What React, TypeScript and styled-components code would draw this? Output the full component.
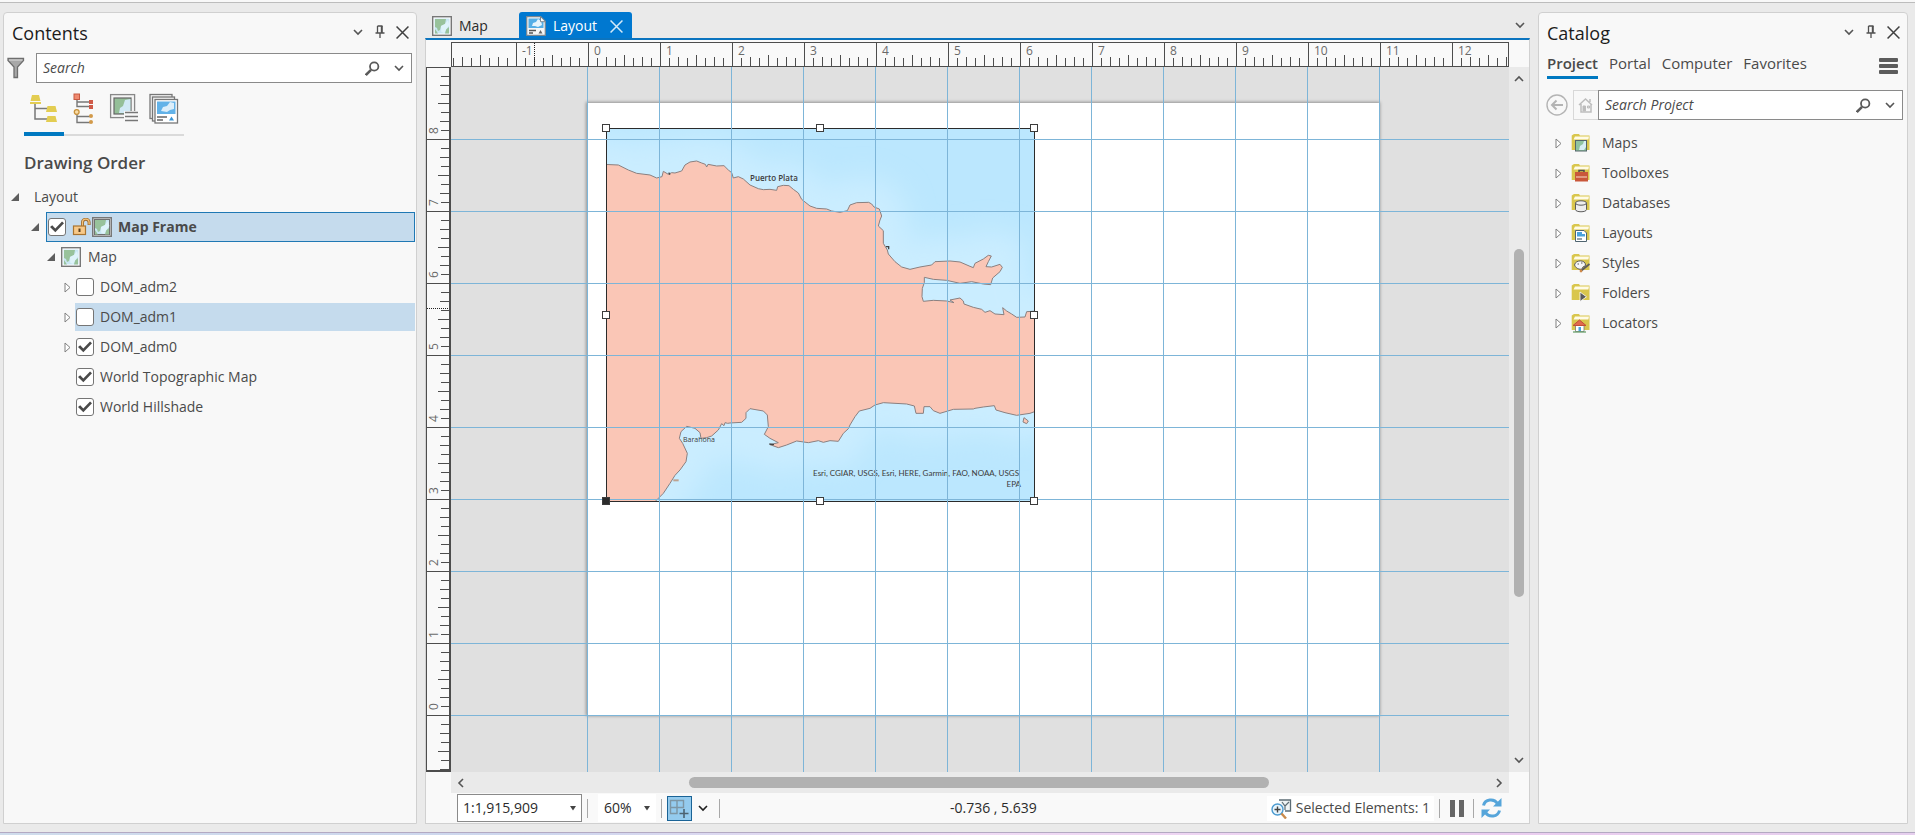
import React from "react";
import styled, { createGlobalStyle, css } from "styled-components";

const INK = "#4a4a4a";
const BLUE = "#0079c1";
const INCH = 72;

const GlobalStyle = createGlobalStyle`
  *, *::before, *::after { box-sizing: border-box; }
  body {
    margin: 0;
    background: #eaeaea;
    color: ${INK};
    font-family: "Open Sans", "Noto Sans", sans-serif;
    font-size: 14px;
    line-height: 20px;
  }
  button, input, select { font: inherit; color: inherit; margin: 0; }
  h1, h2, ul { margin: 0; padding: 0; font-weight: inherit; }
  ul { list-style: none; }
  svg { display: block; flex: none; }
`;

/* ---------- shell ---------- */

const Shell = styled.div`
  display: flex;
  flex-direction: column;
  min-height: 100vh;
`;

const TopEdge = styled.div`
  height: 3px;
  background: #f8f8f8;
  border-bottom: 1px solid #bcbcbc;
`;

const BottomEdge = styled.div`
  height: 3px;
  border-top: 1px solid #b3a9c2;
  background: linear-gradient(90deg, #cfdcec 0%, #cdd6ee 28%, #f0dcf5 50%, #eccdf0 75%, #e6cfee 100%);
`;

const Workspace = styled.main`
  flex: 1;
  display: grid;
  grid-template-columns: 414px minmax(0, 1fr) 370px;
  gap: 8px;
  padding: 9px 7px 8px 3px;
`;

const Pane = styled.section`
  background: #f8f8f8;
  border: 1px solid #d0d0d0;
  border-radius: 4px 4px 0 0;
`;

const PaneHeader = styled.header`
  display: flex;
  align-items: center;
  height: 40px;
  padding: 0 3px 2px 8px;
`;

const PaneTitle = styled.h1`
  flex: 1;
  padding-top: 2px;
  font-size: 18px;
  line-height: 24px;
  color: #1c1c1c;
`;

const IconButton = styled.button<{ $w?: number }>`
  display: flex;
  align-items: center;
  justify-content: center;
  width: ${(p) => p.$w ?? 22}px;
  height: 24px;
  padding: 0;
  border: 0;
  background: none;
  color: #505050;
`;

const FilterButton = styled(IconButton)`
  justify-content: flex-start;
  padding-left: 1px;
`;

const SearchRow = styled.div`
  display: flex;
  align-items: center;
  height: 30px;
  padding: 0 4px 0 2px;
`;

const SearchBox = styled.label`
  flex: 1;
  display: flex;
  align-items: center;
  height: 30px;
  background: #fff;
  border: 1px solid #8a8a8a;
`;

const SearchInput = styled.input`
  flex: 1;
  min-width: 0;
  padding: 0 6px;
  border: 0;
  outline: 0;
  background: none;
  font-style: italic;
  &::placeholder { color: ${INK}; opacity: 1; }
`;

/* ---------- contents ---------- */

const ViewTabs = styled.div`
  display: flex;
  width: 160px;
  margin: 8px 0 0 20px;
  border-bottom: 2px solid #dadada;
`;

const ViewTab = styled.button<{ $active?: boolean }>`
  display: flex;
  justify-content: center;
  width: 40px;
  height: 45px;
  margin-bottom: -2px;
  padding: 2px 0 0;
  border: 0;
  border-bottom: 4px solid ${(p) => (p.$active ? BLUE : "transparent")};
  background: none;
`;

const Heading = styled.h2`
  padding: 17px 0 9px 20px;
  font-size: 17px;
  line-height: 20px;
  font-weight: 600;
`;

const TreeRow = styled.li<{ $indent: number }>`
  display: flex;
  align-items: center;
  height: 30px;
  padding: 0 1px 0 ${(p) => p.$indent}px;
`;

const Toggle = styled.button`
  display: flex;
  justify-content: center;
  width: 16px;
  height: 20px;
  align-items: center;
  padding: 0;
  border: 0;
  background: none;
`;

const Spacer = styled.span`
  width: 16px;
`;

const RowBody = styled.div<{ $tone?: "frame" | "row"; $pad: number }>`
  flex: 1;
  display: flex;
  align-items: center;
  height: 28px;
  padding-left: ${(p) => p.$pad}px;
  ${(p) => p.$tone === "row" && css`background: #c5dbed;`}
  ${(p) =>
    p.$tone === "frame" &&
    css`
      height: 30px;
      margin-left: 3px;
      background: #c5dbed;
      border: 1px solid #1f78b4;
      font-weight: 700;
    `}
`;

const CheckLabel = styled.label`
  display: flex;
  align-items: center;
  gap: 6px;
`;

const Check = styled.input`
  appearance: none;
  display: grid;
  place-items: center;
  width: 18px;
  height: 18px;
  background: #fff;
  border: 1px solid #757575;
  border-radius: 3px;
  &:checked::before {
    content: "";
    width: 14px;
    height: 12px;
    background: #4a4a4a;
    clip-path: polygon(0 50%, 16% 36%, 38% 62%, 86% 4%, 100% 18%, 38% 94%);
  }
`;

const RowIcons = styled.span`
  display: flex;
  align-items: center;
  gap: 1px;
`;

const RowText = styled.span<{ $left?: number }>`
  padding-left: ${(p) => p.$left ?? 7}px;
`;

/* ---------- catalog ---------- */

const CatalogNav = styled.nav`
  display: flex;
  height: 26px;
  gap: 11px;
  padding: 0 9px 0 8px;
`;

const CatalogLink = styled.a<{ $active?: boolean }>`
  height: 26px;
  color: ${INK};
  font-size: 15px;
  text-decoration: none;
  font-weight: ${(p) => (p.$active ? 600 : 400)};
  border-bottom: 3px solid ${(p) => (p.$active ? BLUE : "transparent")};
`;

const NavMenu = styled.button`
  margin: 4px 0 0 auto;
  padding: 0;
  height: 18px;
  border: 0;
  background: none;
`;

const CatalogSearch = styled(SearchRow)`
  margin: 11px 0 8px;
  padding-left: 6px;
`;

const HomeButton = styled(IconButton)`
  height: 30px;
  margin-left: 4px;
  border: 1px solid #d8d8d8;
  border-right: 0;
`;

const CatalogRow = styled.li`
  display: flex;
  align-items: center;
  height: 30px;
  padding-left: 11px;
`;

const CatalogName = styled.span`
  padding-left: 11px;
`;

/* ---------- document view ---------- */

const Document = styled.section`
  display: flex;
  flex-direction: column;
  min-width: 0;
`;

const TabStrip = styled.div`
  display: flex;
  align-items: center;
  height: 26px;
`;

const DocTab = styled.div<{ $active?: boolean }>`
  display: flex;
  align-items: center;
  align-self: stretch;
  padding: 2px 6px 0 7px;
  color: ${(p) => (p.$active ? "#fff" : "#2b2b2b")};
  ${(p) =>
    p.$active
      ? css`background: #0078d0; border-radius: 3px 3px 0 0; margin-left: 25px;`
      : css`background: none;`}
`;

const DocTabButton = styled.button`
  display: flex;
  align-items: center;
  gap: 7px;
  padding: 0;
  border: 0;
  background: none;
`;

const TabClose = styled(IconButton)`
  margin-left: 9px;
  width: 20px;
  color: #fff;
`;

const StripEnd = styled.div`
  margin-left: auto;
`;

const Frame = styled.div`
  flex: 1;
  display: grid;
  grid-template-columns: 25px minmax(0, 1fr) 20px;
  grid-template-rows: 25px minmax(560px, 1fr) 21px 30px;
  padding-top: 2px;
  background: #f9f9f9;
  border: 1px solid #d0d0d0;
  border-top: 2px solid #0b74bf;
`;

const HRuler = styled.div`
  grid-area: 1 / 2;
  overflow: hidden;
  border: 1px solid #4d4d4d;
`;

const VRuler = styled.div`
  grid-area: 2 / 1;
  overflow: hidden;
  border: 1px solid #4d4d4d;
  border-right-width: 2px;
  border-bottom-width: 2px;
`;

const RulerText = styled.text`
  font-size: 12px;
  fill: #6a6a6a;
`;

const Canvas = styled.div`
  grid-area: 2 / 2;
  position: relative;
  overflow: hidden;
  background: #e0e0e0;
`;

const Sheet = styled.div`
  position: absolute;
  left: 136px;
  top: 36px;
  width: 792px;
  height: 612px;
  background: #fff;
  box-shadow: 0 0 3px 1px rgba(0, 0, 0, 0.35);
`;

const MapFrame = styled.svg`
  position: absolute;
  left: 155px;
  top: 61px;
`;

const Guides = styled.svg`
  position: absolute;
  inset: 0;
`;

const Handle = styled.span<{ $x: number; $y: number; $anchor?: boolean }>`
  position: absolute;
  left: ${(p) => 151 + p.$x}px;
  top: ${(p) => 57 + p.$y}px;
  width: 8px;
  height: 8px;
  border: 1px solid #3c3c3c;
  background: ${(p) => (p.$anchor ? "#2b2b2b" : "#fff")};
`;

const VScroll = styled.div`
  grid-area: 2 / 3;
  display: flex;
  flex-direction: column;
  align-items: center;
  background: #eaeaea;
`;

const HScroll = styled.div`
  grid-area: 3 / 2;
  display: flex;
  align-items: center;
  background: #eaeaea;
`;

const Track = styled.div<{ $vertical?: boolean }>`
  flex: 1;
  display: flex;
  flex-direction: ${(p) => (p.$vertical ? "column" : "row")};
`;

const Thumb = styled.div<{ $vertical?: boolean }>`
  border-radius: 6px;
  background: #b1b1b1;
  ${(p) =>
    p.$vertical
      ? css`width: 10px; height: 53%; margin-top: 158px;`
      : css`height: 11px; width: 57%; margin-left: 218px;`}
`;

const StatusBar = styled.footer`
  grid-area: 4 / 1 / 5 / 4;
  display: flex;
  align-items: center;
  padding: 0 25px 0 31px;
  color: #2b2b2b;
`;

const StatusGroup = styled.div`
  display: flex;
  align-items: center;
  gap: 5px;
`;

const SelectWrap = styled.label<{ $w: number; $boxed?: boolean }>`
  display: grid;
  align-items: center;
  width: ${(p) => p.$w}px;
  height: 28px;
  background: #fff;
  border: 1px solid ${(p) => (p.$boxed ? "#8a8a8a" : "transparent")};
  > * { grid-area: 1 / 1; }
  > svg { justify-self: end; margin-right: 4px; pointer-events: none; }
`;

const Select = styled.select`
  appearance: none;
  width: 100%;
  padding: 0 5px;
  border: 0;
  outline: 0;
  background: none;
`;

const Divider = styled.span`
  width: 1px;
  height: 19px;
  background: #a8a8a8;
`;

const SnapButton = styled.button`
  width: 25px;
  height: 25px;
  padding: 1px;
  border: 1px solid #1a6396;
  background: #94cbee;
`;

const Coordinates = styled.output`
  flex: 1;
  text-align: center;
`;

const Selected = styled.button`
  display: flex;
  align-items: center;
  gap: 4px;
  height: 25px;
  padding: 0 4px;
  border: 0;
  background: #fff;
  color: ${INK};
`;

/* ---------- icons ---------- */

const Chevron = ({ dir = "down", color = "#555" }: { dir?: "down" | "up" | "left" | "right"; color?: string }) => {
  const d = { down: "M1 3l4 4 4-4", up: "M1 7l4-4 4 4", left: "M7 1L3 5l4 4", right: "M3 1l4 4-4 4" }[dir];
  return (
    <svg width="10" height="10" viewBox="0 0 10 10" fill="none" stroke={color} strokeWidth="1.6">
      <path d={d} />
    </svg>
  );
};

const Pin = () => (
  <svg width="10" height="14" viewBox="0 0 10 14" fill="none" stroke="#505050">
    <path d="M2.500 1h5M2.500 1v6.500M0.500 8h9M5 8v5" strokeWidth="1.300" />
    <path d="M6.800 1v7" strokeWidth="2" />
  </svg>
);

const Cross = ({ color = "#404040" }) => (
  <svg width="13" height="13" viewBox="0 0 12 12" stroke={color} strokeWidth="1.400">
    <path d="M.5.5l11 11M11.500.5l-11 11" />
  </svg>
);

const Magnifier = () => (
  <svg width="15" height="15" viewBox="0 0 15 15" fill="none" stroke="#5a5a5a">
    <circle cx="9.200" cy="5.500" r="4.200" strokeWidth="1.800" />
    <path d="M6 8.800L.8 14" strokeWidth="2.600" />
  </svg>
);

const Funnel = () => (
  <svg width="18" height="22" viewBox="0 0 18 22">
    <path d="M1 1.500h15.500v2L10.500 10v10.500h-3.500V10L1 3.500z" fill="#a8a8a8" stroke="#6e6e6e" strokeWidth="1.300" />
    <path d="M2 3h13.500" stroke="#ddd" />
  </svg>
);

const Collapse = () => (
  <svg width="8" height="8" viewBox="0 0 8 8"><path d="M8 0v8H0z" fill="#5e5e5e" /></svg>
);

const Expand = () => (
  <svg width="7" height="11" viewBox="0 0 7 11"><path d="M1 1v9l5-4.500z" fill="#fff" stroke="#808080" /></svg>
);

const MapGlyph = ({ size = 20, frame = false }: { size?: number; frame?: boolean }) => (
  <svg width={size} height={size} viewBox="0 0 20 20">
    <rect x=".7" y=".7" width="18.600" height="18.600" fill={frame ? "#dcdcdc" : "#fff"} stroke="#777" strokeWidth="1.400" />
    <rect x="2.500" y="2.500" width="15" height="15" fill="#c9e6f3" stroke={frame ? "#707070" : "none"} />
    <path d="M3 3h11l-1 5-4 2-1 4-2 1-1-3-2-1z" fill="#98c29b" />
    <path d="M3 13l3 4.500H3zM17 11v6.500h-4l1-4z" fill="#98c29b" />
    <path d="M9 10l4-2 3-4 1.300 5-3 4-2 4-3-1z" fill="#dff3fa" />
  </svg>
);

const LayoutGlyph = ({ size = 20 }) => (
  <svg width={size} height={size} viewBox="0 0 20 20">
    <path d="M.7.700h14l4.600 4.600v14H.7z" fill="#f7f7f7" stroke="#7a8791" strokeWidth="1.200" />
    <path d="M2.500 2.500h12v3.500h3v6h-15z" fill="#55aee6" />
    <path d="M6 10l1-3 3-1 2-3 3 2 1 4-4 2-3-1z" fill="#e6f4fc" />
    <path d="M14.500.7v5h5z" fill="#fff" stroke="#7a8791" />
    <path d="M3 14.500h7M3 17h4" stroke="#555" strokeWidth="1.400" />
    <path d="M12.500 17.500l2-3.500 2 3.500z" fill="#666" />
  </svg>
);

const Lock = () => (
  <svg width="19" height="18" viewBox="0 0 19 18" fill="none">
    <path d="M10.500 8V4.500a3.300 3.300 0 0 1 6.600 0V7" stroke="#9c6a2c" strokeWidth="3" />
    <path d="M10.500 8V4.500a3.300 3.300 0 0 1 6.600 0V6.500" stroke="#f5c27a" strokeWidth="1.300" />
    <rect x="1.500" y="8" width="12" height="8.500" fill="#f8c988" stroke="#a97430" strokeWidth="1.200" />
    <path d="M7.500 10.500v3.500" stroke="#5c4020" strokeWidth="2" />
  </svg>
);

const OrderIcon = () => (
  <svg width="30" height="32" viewBox="0 0 30 32">
    <path d="M6 11v15h13M6 15.500h13" fill="none" stroke="#777" strokeWidth="1.500" />
    <path d="M3 2h7l1.500 6H1.500zM1 9h11v2H1zM18.500 13h8l1.500 6H17zM18.500 23h8l1.500 6H17z" fill="#e3cd52" />
  </svg>
);

const SourceIcon = () => (
  <svg width="24" height="32" viewBox="0 0 24 32" fill="none">
    <path d="M5 6v7.500h13M5 9h13M5 20v9.500h13M5 23.500h13" stroke="#777" strokeWidth="1.400" />
    <rect x="2" y="1" width="5.500" height="5.500" fill="#f08a70" stroke="#c65a42" />
    <path d="M17 7h4v4h-4zM17 12h4v4h-4z" fill="#cf5a48" />
    <circle cx="4.700" cy="19" r="2.400" fill="#f9dca8" stroke="#c8923c" strokeWidth="1.300" />
    <circle cx="19" cy="23" r="2" fill="#d29a4a" />
    <circle cx="19" cy="29" r="2" fill="#d29a4a" />
  </svg>
);

const SelectionIcon = () => (
  <svg width="30" height="30" viewBox="0 0 30 30">
    <rect x="1.600" y="1.600" width="24" height="23" fill="#f4f4f4" stroke="#888" strokeWidth="1.300" />
    <rect x="5" y="5" width="17" height="16" fill="#94bf98" stroke="#666" strokeWidth="1.200" />
    <path d="M10 20l1-5 3-2 2-6 5.500-1v14z" fill="#d0e9f5" />
    <path d="M15 18h15v10H15z" fill="#f8f8f8" />
    <path d="M16 19.500h13M16 23.500h13M16 27.500h13" stroke="#777" strokeWidth="1.300" />
  </svg>
);

const ElementsIcon = () => (
  <svg width="30" height="32" viewBox="0 0 30 32">
    <rect x="1" y="1.500" width="22" height="24" fill="#f4f4f4" stroke="#777" strokeWidth="1.300" />
    <rect x="3.500" y="4" width="22" height="24" fill="#f4f4f4" stroke="#777" strokeWidth="1.300" />
    <rect x="6" y="6.500" width="22.500" height="23.500" fill="#fff" stroke="#777" strokeWidth="1.300" />
    <rect x="8" y="8.500" width="18.500" height="12.500" fill="#62b2e8" />
    <path d="M12 18l2-4 4-1 3-4 4 1v6l-4 1-3 2z" fill="#dceefa" />
    <path d="M8 24h10M8 27h6" stroke="#666" strokeWidth="1.400" />
    <path d="M20 27.500l2.500-4 2.500 4z" fill="#3a95d4" />
  </svg>
);

const overlays: Record<string, React.ReactNode> = {
  Maps: (
    <>
      <rect x="4.500" y="7.500" width="11" height="10.500" fill="#8fc3a0" stroke="#55666b" />
      <path d="M8 17l1-4 3-2 1-3h2v6l-2 3z" fill="#d7eef4" />
    </>
  ),
  Toolboxes: (
    <>
      <path d="M8 9V7.500h5V9" fill="none" stroke="#4c4c4c" strokeWidth="1.500" />
      <rect x="4" y="9" width="13" height="9.500" fill="#c9573a" />
      <path d="M5 14h11" stroke="#f2c6b2" strokeWidth="1.200" />
    </>
  ),
  Databases: (
    <g fill="#eee" stroke="#5c5c5c">
      <path d="M4.500 10v6.500c0 3 11 3 11 0V10" />
      <ellipse cx="10" cy="10" rx="5.500" ry="2.200" />
    </g>
  ),
  Layouts: (
    <>
      <path d="M4.500 7.500h8.500l2.500 2.500v8.500h-11z" fill="#fff" stroke="#4f6470" />
      <path d="M6 9h5v2h3v2.500H6z" fill="#4aa3dc" />
      <path d="M6 16h5" stroke="#4f6470" strokeWidth="1.200" />
    </>
  ),
  Styles: (
    <>
      <path d="M3.500 12c1-5.500 11-5.500 11 0 0 2-3 1-3 3s-6 2-8-3z" fill="#f6f6f6" stroke="#5c5c5c" />
      <path d="M6.500 11h1.500M10 10h1.500" stroke="#5c5c5c" strokeWidth="1.200" />
      <path d="M10.500 17.500l8-6.500" stroke="#5c5c5c" strokeWidth="1.800" />
      <circle cx="10" cy="18" r="1.400" fill="#d08a4a" />
    </>
  ),
  Folders: <path d="M9 9l6.500 4.800L9 18.500z" fill="#5a5a5a" stroke="#fff" strokeWidth=".8" />,
  Locators: (
    <>
      <path d="M4.500 12.500h8.500v6H4.500z" fill="#fff" stroke="#777" strokeWidth=".8" />
      <path d="M2 12.500l6.500-5.500 6.500 5.500z" fill="#e06a4e" stroke="#c24f38" />
      <path d="M7.500 14h2.500v4H7.500z" fill="#4aa3dc" />
      <path d="M2 19h13" stroke="#5e9a62" strokeWidth="1.200" />
    </>
  ),
};

const Folder = ({ kind }: { kind: string }) => (
  <svg width="20" height="20" viewBox="0 0 20 20">
    <path d="M.7 17V2.500L3 1h5l1 1.500h9.500V17z" fill="#d9c64d" />
    <path d="M2.500 6.500L4 3.500h14l-.6 3z" fill="#fffbe6" />
    {overlays[kind]}
  </svg>
);

const Back = () => (
  <svg width="22" height="22" viewBox="0 0 22 22" fill="none" stroke="#b4b4b4">
    <circle cx="11" cy="11" r="10" strokeWidth="1.400" />
    <path d="M17 11H6M10.500 6.500L6 11l4.500 4.500" strokeWidth="2" />
  </svg>
);

const Home = () => (
  <svg width="16" height="16" viewBox="0 0 16 16" fill="none" stroke="#bdbdbd">
    <path d="M1 8l6.500-6 6.500 6M3 7v8h10V7M12 5V2" strokeWidth="1.500" />
    <path d="M5 9h2.500v5H5z" fill="#bdbdbd" />
    <path d="M9.500 9h2v2h-2z" fill="#ddd" />
  </svg>
);

const Caret = () => (
  <svg width="8" height="5" viewBox="0 0 8 5"><path d="M1 0h6L4 4.500z" fill="#444" /></svg>
);

const SnapIcon = () => (
  <svg width="21" height="21" viewBox="0 0 21 21" fill="none" stroke="#7d96a5">
    <path d="M1.500 2.500h13v7h-13zM1.500 9.500v6h6.500v-13" strokeWidth="1.400" />
    <path d="M15 11v9M10.500 15.500h9" stroke="#4c6270" strokeWidth="1.600" />
  </svg>
);

const ZoomSelected = () => (
  <svg width="21" height="21" viewBox="0 0 21 21" fill="none">
    <path d="M8 2h11.500v11H14" fill="#eef3f5" stroke="#5d6d75" strokeWidth="1.300" />
    <path d="M11 4l3 4 4-4M14 8v4" stroke="#5d6d75" strokeWidth="1.200" />
    <circle cx="6.500" cy="11.500" r="5.500" fill="#e8f5fd" stroke="#4a9ad0" strokeWidth="1.400" />
    <path d="M6.500 8.500v6M3.500 11.500h6" stroke="#444" strokeWidth="1.400" />
    <path d="M10.500 15.500l4.500 5" stroke="#c98b4c" strokeWidth="2.400" />
  </svg>
);

const Pause = () => (
  <svg width="14" height="17" viewBox="0 0 14 17"><path d="M0 0h5v17H0zM9 0h5v17H9z" fill="#666" /></svg>
);

const Refresh = () => (
  <svg width="21" height="20" viewBox="0 0 21 20">
    <g fill="none" stroke="#56a5da" strokeWidth="3">
      <path d="M2.500 7.500C4 1 13 0 16.500 5.500" />
      <path d="M18.500 12.500C17 19 8 20 4.500 14.500" />
    </g>
    <path d="M20.500 0v8.500H12zM.5 20v-8.500H9z" fill="#56a5da" />
  </svg>
);

/* ---------- rulers and map ---------- */

const tickLength = (i: number) => (i % 8 === 0 ? 25 : i % 4 === 0 ? 11 : i % 2 === 0 ? 9 : 8);
const range = (from: number, to: number) => Array.from({ length: to - from + 1 }, (_, i) => from + i);

const HorizontalRuler = () => (
  <HRuler>
    <svg width="100%" height="23">
      <g shapeRendering="crispEdges">
        {range(-15, 240).map((i) => (
          <path key={i} d={`M${136.5 + i * 9} 23v${-tickLength((i + 800) % 8)}`} stroke="#4d4d4d" />
        ))}
        <path d="M82.500 0v23" stroke="#222" strokeDasharray="1 1" />
      </g>
      {range(-1, 12).map((n) => (
        <RulerText key={n} x={142 + n * INCH} y="12">{n}</RulerText>
      ))}
    </svg>
  </HRuler>
);

const VerticalRuler = () => (
  <VRuler>
    <svg width="22" height="100%">
      <g shapeRendering="crispEdges">
        {range(-60, 71).map((i) => (
          <path key={i} d={`M22 ${647.5 - i * 9}h${-tickLength((i + 800) % 8)}`} stroke="#4d4d4d" />
        ))}
        <path d="M0 240.500h22" stroke="#222" strokeDasharray="1 1" />
      </g>
      {range(0, 8).map((n) => (
        <RulerText key={n} transform={`translate(11 ${642 - n * INCH}) rotate(-90)`}>{n}</RulerText>
      ))}
    </svg>
  </VRuler>
);

const COAST =
  "M10 133L55 135 85 150 110 160 150 165 170 174 186 170 190 154 205 163 215 158 225 159 245 153 255 135 270 126 290 123 305 129 316 133 320 141 324 133 350 138 372 137 385 150 395 158 400 174 415 170 430 177 450 195 475 206 490 209 510 208 530 211 533 200 550 196 567 197 580 208 595 219 605 238 630 258 650 265 680 267 695 273 720 277 742 272 750 255 770 248 806 247 815 252 822 261 838 267 845 288 840 300 835 318 850 332 850 370 862 390 865 402 885 425 905 441 930 448 960 441 995 435 1005 425 1050 423 1080 426 1110 439 1120 443 1125 430 1150 417 1165 406 1174 408 1165 425 1158 440 1175 441 1200 433 1207 442 1200 455 1178 474 1172 494 1150 492 1115 485 1080 490 1040 481 1000 478 973 472 973 488 967 505 966 530 970 544 1000 541 1040 543 1062 548 1050 540 1080 534 1090 543 1092 552 1120 562 1145 568 1155 577 1170 572 1185 582 1212 584 1208 563 1220 573 1235 582 1250 592 1275 591 1280 575 1312 573V872L1290 880 1250 886 1215 878 1188 870 1183 857 1150 861 1125 865 1120 867 1060 868 1020 880 1000 872 990 860 972 860 970 880 948 880 943 858 920 852 850 848 825 855 810 865 778 873 765 890 750 915 745 926 730 940 715 964 690 962 670 967 655 962 625 968 590 963 560 975 535 983 510 974 535 968 510 955 493 943 505 920 502 885 490 873 450 866 438 878 438 895 425 907 390 909 383 910 375 908 372 917 365 911 355 930 335 948 320 953 303 955 300 938 285 925 260 919 243 935 238 955 248 970 262 1000 258 1025 240 1050 225 1066 210 1090 190 1120 160 1150H10z";

const MapLabel = styled.text<{ $size: number; $strong?: boolean }>`
  font-size: ${(p) => p.$size}px;
  font-weight: ${(p) => (p.$strong ? 600 : 400)};
  fill: #3c3c3c;
`;

const Credit = styled.text`
  font-family: Lato, "Open Sans", sans-serif;
  font-size: 8px;
  text-anchor: end;
  fill: #3c3c3c;
`;

const DominicanMap = () => (
  <MapFrame width="429" height="374" viewBox="0 0 429 374">
    <defs>
      <filter id="shallow" x="-20%" y="-20%" width="140%" height="140%">
        <feGaussianBlur stdDeviation="40" />
      </filter>
    </defs>
    <rect width="429" height="374" fill="#bbe7fe" />
    <g transform="scale(.33333) translate(-18 -24)">
      <path d={COAST} fill="none" stroke="#caedff" strokeWidth="150" filter="url(#shallow)" />
      <path d={COAST} fill="#fac6b6" stroke="#8a8080" strokeWidth="3" strokeLinejoin="round" />
      <path d="M1272 893l13 10-5 8-11-5z" fill="#fac6b6" stroke="#8a8080" strokeWidth="3" />
      <path d="M858 380h8v8M206 158l4 6M508 972l14 2" fill="none" stroke="#444" strokeWidth="4" />
      <path d="M220 1078h16v6h-16z" fill="#bda391" />
    </g>
    <MapLabel x="144" y="53" $size={8} $strong>Puerto Plata</MapLabel>
    <MapLabel x="77" y="314" $size={7}>Barahona</MapLabel>
    <Credit x="413" y="348">Esri, CGIAR, USGS, Esri, HERE, Garmin, FAO, NOAA, USGS</Credit>
    <Credit x="415" y="359">EPA</Credit>
    <rect x=".5" y=".5" width="428" height="373" fill="none" stroke="#2b2b2b" />
  </MapFrame>
);

const LayoutCanvas = () => (
  <Canvas>
    <Sheet />
    <DominicanMap />
    <Guides width="100%" height="100%" stroke="#7db5d8" shapeRendering="crispEdges">
      {range(0, 11).map((n) => (
        <line key={`v${n}`} x1={136.5 + n * INCH} x2={136.5 + n * INCH} y1="0" y2="100%" />
      ))}
      {range(0, 8).map((n) => (
        <line key={`h${n}`} y1={648.5 - n * INCH} y2={648.5 - n * INCH} x1="0" x2="100%" />
      ))}
    </Guides>
    {[0, 214, 428].flatMap((x) =>
      [0, 187, 373]
        .filter((y) => !(x === 214 && y === 187))
        .map((y) => <Handle key={`${x}-${y}`} $x={x} $y={y} $anchor={x === 0 && y === 373} />)
    )}
  </Canvas>
);

/* ---------- panes ---------- */

const Header = ({ title }: { title: string }) => (
  <PaneHeader>
    <PaneTitle>{title}</PaneTitle>
    <IconButton aria-label="Pane options"><Chevron /></IconButton>
    <IconButton aria-label="Auto hide"><Pin /></IconButton>
    <IconButton aria-label="Close pane"><Cross /></IconButton>
  </PaneHeader>
);

const Search = ({ hint }: { hint: string }) => (
  <SearchBox>
    <SearchInput type="text" placeholder={hint} aria-label={hint} />
    <IconButton aria-label="Run search" $w={29}><Magnifier /></IconButton>
    <IconButton aria-label="Search options" $w={24}><Chevron /></IconButton>
  </SearchBox>
);

const layers = [
  { name: "DOM_adm2", on: false, expandable: true },
  { name: "DOM_adm1", on: false, expandable: true, selected: true },
  { name: "DOM_adm0", on: true, expandable: true },
  { name: "World Topographic Map", on: true },
  { name: "World Hillshade", on: true },
];

const Contents = () => (
  <Pane>
    <Header title="Contents" />
    <SearchRow>
      <FilterButton aria-label="Filter" $w={30}><Funnel /></FilterButton>
      <Search hint="Search" />
    </SearchRow>
    <ViewTabs>
      <ViewTab $active aria-label="List by drawing order"><OrderIcon /></ViewTab>
      <ViewTab aria-label="List by element type"><SourceIcon /></ViewTab>
      <ViewTab aria-label="List by map frame"><SelectionIcon /></ViewTab>
      <ViewTab aria-label="List map series"><ElementsIcon /></ViewTab>
    </ViewTabs>
    <Heading>Drawing Order</Heading>
    <ul>
      <TreeRow $indent={3}>
        <Toggle aria-label="Collapse Layout"><Collapse /></Toggle>
        <RowBody $pad={11}>Layout</RowBody>
      </TreeRow>
      <TreeRow $indent={23}>
        <Toggle aria-label="Collapse Map Frame"><Collapse /></Toggle>
        <RowBody $tone="frame" $pad={1}>
          <CheckLabel>
            <Check type="checkbox" defaultChecked />
            <RowIcons><Lock /><MapGlyph frame /></RowIcons>
            Map Frame
          </CheckLabel>
        </RowBody>
      </TreeRow>
      <TreeRow $indent={39}>
        <Toggle aria-label="Collapse Map"><Collapse /></Toggle>
        <RowBody $pad={2}>
          <MapGlyph />
          <RowText>Map</RowText>
        </RowBody>
      </TreeRow>
      {layers.map((l) => (
        <TreeRow key={l.name} $indent={55}>
          {l.expandable ? <Toggle aria-label={`Expand ${l.name}`}><Expand /></Toggle> : <Spacer />}
          <RowBody $pad={1} $tone={l.selected ? "row" : undefined}>
            <CheckLabel>
              <Check type="checkbox" defaultChecked={l.on} />
              {l.name}
            </CheckLabel>
          </RowBody>
        </TreeRow>
      ))}
    </ul>
  </Pane>
);

const Catalog = () => (
  <Pane>
    <Header title="Catalog" />
    <CatalogNav>
      {["Project", "Portal", "Computer", "Favorites"].map((t, i) => (
        <CatalogLink key={t} href="#" $active={i === 0}>{t}</CatalogLink>
      ))}
      <NavMenu aria-label="Menu">
        <svg width="19" height="17" viewBox="0 0 19 17" fill="#5c5c5c">
          <rect width="19" height="4" rx="1" y="0" />
          <rect width="19" height="4" rx="1" y="6" />
          <rect width="19" height="4" rx="1" y="12" />
        </svg>
      </NavMenu>
    </CatalogNav>
    <CatalogSearch>
      <IconButton aria-label="Back" $w={24}><Back /></IconButton>
      <HomeButton aria-label="Home" $w={25}><Home /></HomeButton>
      <Search hint="Search Project" />
    </CatalogSearch>
    <ul>
      {Object.keys(overlays).map((name) => (
        <CatalogRow key={name}>
          <Toggle aria-label={`Expand ${name}`}><Expand /></Toggle>
          <RowText $left={5}><Folder kind={name} /></RowText>
          <CatalogName>{name}</CatalogName>
        </CatalogRow>
      ))}
    </ul>
  </Pane>
);

const DocumentView = () => (
  <Document>
    <TabStrip>
      <DocTab>
        <DocTabButton><MapGlyph />Map</DocTabButton>
      </DocTab>
      <DocTab $active>
        <DocTabButton><LayoutGlyph />Layout</DocTabButton>
        <TabClose aria-label="Close Layout"><Cross color="#d5eaf8" /></TabClose>
      </DocTab>
      <StripEnd>
        <IconButton aria-label="Open views" $w={20}><Chevron /></IconButton>
      </StripEnd>
    </TabStrip>
    <Frame>
      <HorizontalRuler />
      <VerticalRuler />
      <LayoutCanvas />
      <VScroll>
        <IconButton aria-label="Scroll up" $w={20}><Chevron dir="up" /></IconButton>
        <Track $vertical><Thumb $vertical /></Track>
        <IconButton aria-label="Scroll down" $w={20}><Chevron /></IconButton>
      </VScroll>
      <HScroll>
        <IconButton aria-label="Scroll left" $w={20}><Chevron dir="left" /></IconButton>
        <Track><Thumb /></Track>
        <IconButton aria-label="Scroll right" $w={20}><Chevron dir="right" /></IconButton>
      </HScroll>
      <StatusBar>
        <StatusGroup>
          <SelectWrap $w={125} $boxed>
            <Select aria-label="Map scale"><option>1:1,915,909</option></Select>
            <Caret />
          </SelectWrap>
          <Divider />
          <span />
          <SelectWrap $w={58}>
            <Select aria-label="Zoom level"><option>60%</option></Select>
            <Caret />
          </SelectWrap>
          <Divider />
          <SnapButton aria-label="Snapping"><SnapIcon /></SnapButton>
          <IconButton aria-label="Snapping options" $w={12}><Chevron color="#1f1f1f" /></IconButton>
          <span />
          <Divider />
        </StatusGroup>
        <Coordinates>-0.736 , 5.639</Coordinates>
        <StatusGroup>
          <Selected><ZoomSelected />Selected Elements: 1</Selected>
          <Divider />
          <IconButton aria-label="Pause drawing" $w={23}><Pause /></IconButton>
          <Divider />
          <IconButton aria-label="Refresh" $w={25}><Refresh /></IconButton>
        </StatusGroup>
      </StatusBar>
    </Frame>
  </Document>
);

export default function App() {
  return (
    <Shell>
      <GlobalStyle />
      <TopEdge />
      <Workspace>
        <Contents />
        <DocumentView />
        <Catalog />
      </Workspace>
      <BottomEdge />
    </Shell>
  );
}
